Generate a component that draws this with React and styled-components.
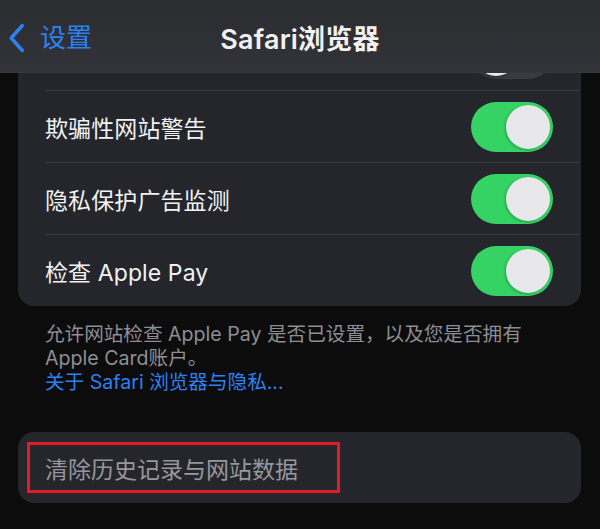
import React from 'react';
import styled, { createGlobalStyle } from 'styled-components';

const GlobalStyle = createGlobalStyle`
    html, body {
        margin: 0;
        padding: 0;
        background: #0c0c0d;
    }
    * {
        box-sizing: border-box;
    }
`;

const rows = [
    { label: '', on: false },
    { label: '欺骗性网站警告', on: true },
    { label: '隐私保护广告监测', on: true },
    { label: '检查 Apple Pay', on: true },
];

function Toggle({ on }) {
    return (
        <Track $on={on}>
            <Knob $on={on} />
        </Track>
    );
}

function App() {
    return (
        <>
            <GlobalStyle />
            <Screen>
                <NavBar>
                    <BackButton>
                        <svg width='17' height='30' viewBox='0 0 17 30' fill='none'>
                            <path d='M14.2 2.6 L3.2 15 L14.2 27.4' stroke='#2c82f2' strokeWidth='3.6' strokeLinecap='round' strokeLinejoin='round' />
                        </svg>
                        <span>设置</span>
                    </BackButton>
                    <Title>Safari浏览器</Title>
                    <span />
                </NavBar>
                <Content>
                    <Group>
                        {rows.map((row, i) => (
                            <Row key={i}>
                                <Label>{row.label}</Label>
                                <Toggle on={row.on} />
                            </Row>
                        ))}
                    </Group>
                    <Footer>
                        <p>允许网站检查 Apple Pay 是否已设置，以及您是否拥有 Apple Card账户。</p>
                        <Link>关于 Safari 浏览器与隐私...</Link>
                    </Footer>
                    <ActionGroup>
                        <Highlight>
                            <ActionLabel>清除历史记录与网站数据</ActionLabel>
                        </Highlight>
                    </ActionGroup>
                </Content>
            </Screen>
        </>
    );
}

const Screen = styled.div`
    position: relative;
    width: 600px;
    height: 529px;
    overflow: hidden;
    background: #0c0c0d;
    font-family: Inter, 'Noto Sans CJK SC', sans-serif;
`;

const NavBar = styled.header`
    position: absolute;
    top: 0;
    left: 0;
    right: 0;
    z-index: 2;
    height: 73px;
    display: grid;
    grid-template-columns: 1fr auto 1fr;
    align-items: center;
    padding-top: 3px;
    background: linear-gradient(180deg, #2c2d31 0%, #323338 100%);
    border-bottom: 1px solid #36373c;
`;

const BackButton = styled.div`
    display: flex;
    align-items: center;
    gap: 15px;
    padding-left: 8px;
    color: #2c82f2;
    font-size: 26px;
    line-height: 1;
`;

const Title = styled.h1`
    margin: 0;
    color: #f1f1f3;
    font-size: 27px;
    font-weight: 600;
    letter-spacing: 0.2px;
`;

const Content = styled.main`
    padding: 18px 19px 0 18px;
`;

const Group = styled.section`
    background: #25262b;
    border-radius: 16px;
    overflow: hidden;
`;

const Row = styled.div`
    height: 72px;
    margin-left: 27px;
    padding-right: 28px;
    display: flex;
    align-items: center;
    justify-content: space-between;
    & + & {
        border-top: 1px solid #38393e;
    }
`;

const Label = styled.span`
    color: #f2f2f4;
    font-size: 23px;
    letter-spacing: 0.1px;
`;

const Track = styled.div`
    width: 82px;
    height: 50px;
    border-radius: 25px;
    padding: 3px;
    display: flex;
    justify-content: ${props => (props.$on ? 'flex-end' : 'flex-start')};
    background: ${props => (props.$on ? '#35d364' : '#3a3b40')};
`;

const Knob = styled.div`
    width: 44px;
    height: 44px;
    border-radius: 50%;
    background: #e8e8ea;
    box-shadow: -1px 1px 3px rgba(0, 0, 0, 0.25);
`;

const Footer = styled.div`
    padding: 16px 40px 0 27px;
    color: #8e8e94;
    font-size: 19.6px;
    line-height: 24px;
    p {
        margin: 0;
    }
`;

const Link = styled.div`
    color: #2c82f2;
`;

const ActionGroup = styled.section`
    margin-top: 38px;
    height: 71px;
    padding: 10px 9px;
    background: #25262b;
    border-radius: 16px;
`;

const Highlight = styled.div`
    width: 313px;
    height: 51px;
    padding-left: 15px;
    display: flex;
    align-items: center;
    border: 3px solid #e51c28;
`;

const ActionLabel = styled.span`
    color: #97979d;
    font-size: 23px;
`;

export default App;
